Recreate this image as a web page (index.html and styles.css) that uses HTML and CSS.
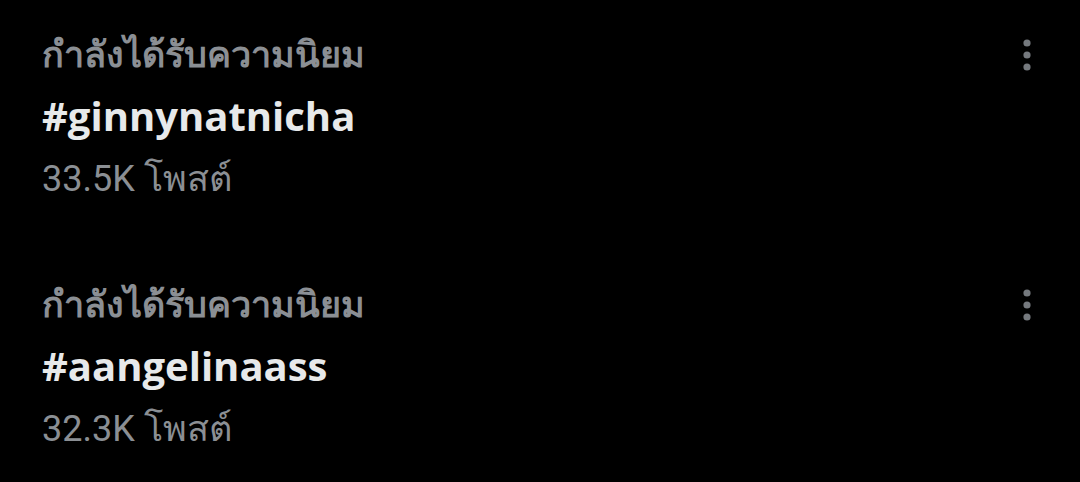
FILE: index.html
```html
<!DOCTYPE html>
<html lang="th">
<head>
  <meta charset="UTF-8">
  <title>Trending</title>
  <link rel="stylesheet" href="styles.css">
</head>
<body>

  <!-- Trend list -->
  <div class="trends">

    <div class="trend">
      <div class="trend-text">
        <div class="trend-label">กำลังได้รับความนิยม</div>
        <div class="trend-name">#ginnynatnicha</div>
        <div class="trend-count">33.5K โพสต์</div>
      </div>
      <button class="more" aria-label="More">
        <svg width="14" height="40" viewBox="0 0 14 40">
          <circle cx="7" cy="8" r="3.6"/>
          <circle cx="7" cy="20" r="3.6"/>
          <circle cx="7" cy="32" r="3.6"/>
        </svg>
      </button>
    </div>

    <div class="trend">
      <div class="trend-text">
        <div class="trend-label">กำลังได้รับความนิยม</div>
        <div class="trend-name">#aangelinaass</div>
        <div class="trend-count">32.3K โพสต์</div>
      </div>
      <button class="more" aria-label="More">
        <svg width="14" height="40" viewBox="0 0 14 40">
          <circle cx="7" cy="8" r="3.6"/>
          <circle cx="7" cy="20" r="3.6"/>
          <circle cx="7" cy="32" r="3.6"/>
        </svg>
      </button>
    </div>

  </div>

</body>
</html>
```

FILE: styles.css
```css
/* Page */
body {
  background-color: #000;
  color: #e7e9ea;
  font-family: Roboto, "Noto Sans", "DejaVu Sans", sans-serif;
  margin: 0;
  padding: 0;
}

/* One row per trend */
.trend {
  display: flex;
  justify-content: space-between;
  align-items: flex-start;
  height: 250px;
  padding: 28px 46px 0 42px;
  box-sizing: border-box;
}

.trend-label {
  color: #8b8f94;
  font-size: 36px;
  font-weight: bold;
  line-height: 54px;
}

.trend-name {
  font-family: "Open Sans", Roboto, sans-serif;
  font-size: 40px;
  font-weight: bold;
  line-height: 68px;
}

.trend-count {
  color: #8b8f94;
  font-size: 36px;
  line-height: 58px;
}

/* Overflow (three dots) button */
.more {
  background: none;
  border: none;
  padding: 0;
  margin-top: 7px;
  fill: #75797e;
  cursor: pointer;
}
```
